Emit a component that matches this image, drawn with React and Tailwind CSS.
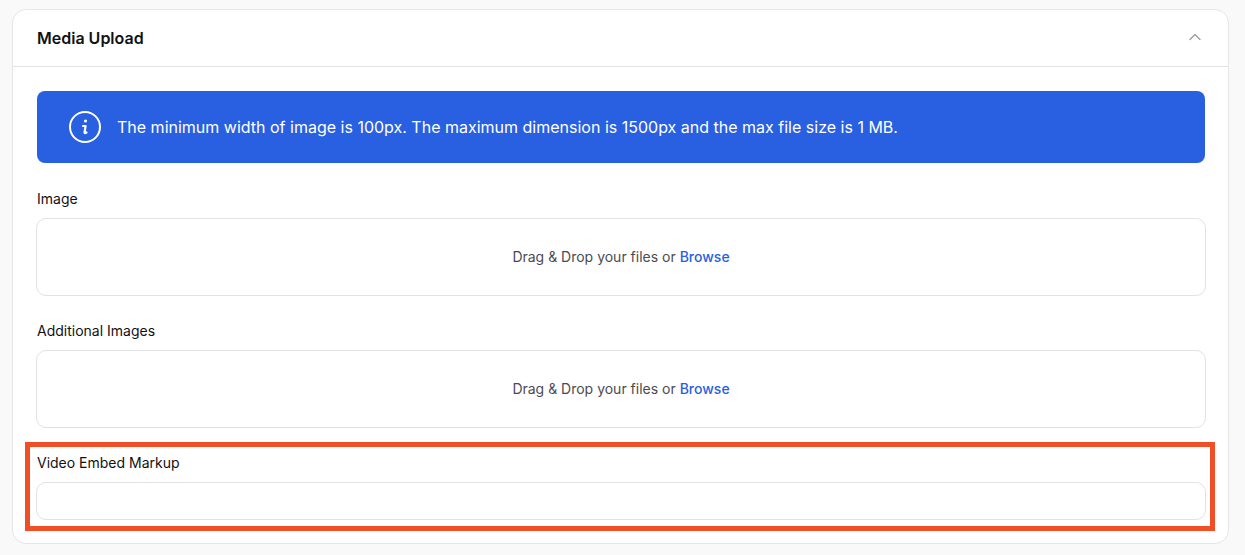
import { ChevronUp } from "lucide-react";

const DropZone = () => (
  <div className="flex h-[78px] items-center justify-center rounded-[10px] border border-[#e2e2e4] bg-white pb-0.5 text-[14px] text-[#4b4b52]">
    <span>
      Drag &amp; Drop your files or <span className="font-medium text-[#2860e1]">Browse</span>
    </span>
  </div>
);

const App = () => {
  return (
    <div className="h-[555px] overflow-hidden bg-[#f9f9f9] px-3 pt-[9px] font-['Inter',sans-serif]">
      <div className="h-[535px] w-[1217px] rounded-[14px] border border-[#e6e6e8] bg-white">
        <div className="flex h-[57px] items-center justify-between border-b border-[#e2e2e4] pr-[23px] pl-6">
          <h2 className="text-[16px] font-semibold text-[#111114]">Media Upload</h2>
          <ChevronUp size={20} strokeWidth={1.5} className="-mt-0.5 text-[#9a9aa2]" />
        </div>

        <div className="pt-6 pr-[23px] pl-6">
          <div className="flex h-[72px] items-center gap-4 rounded-lg bg-[#2860e1] pl-8 text-[16px] text-white">
            <svg width="32" height="32" viewBox="0 0 32 32" fill="none" stroke="white">
              <circle cx="16" cy="16" r="15" strokeWidth="2" />
              <circle cx="16.5" cy="10" r="1.6" fill="white" stroke="none" />
              <path d="M14 15h2.6l-1.1 6.6c0 .6.8.7 2-.1" strokeWidth="2.2" strokeLinecap="round" strokeLinejoin="round" />
            </svg>
            <p>The minimum width of image is 100px. The maximum dimension is 1500px and the max file size is 1 MB.</p>
          </div>

          <div className="-mx-px mt-[26px]">
            <label className="mx-px block text-[14px] leading-5 font-normal text-[#111114]">Image</label>
            <div className="mt-[9px]">
              <DropZone />
            </div>
          </div>

          <div className="-mx-px mt-[25px]">
            <label className="mx-px block text-[14px] leading-5 font-normal text-[#111114]">Additional Images</label>
            <div className="mt-[9px]">
              <DropZone />
            </div>
          </div>

          <div className="relative -mx-px mt-[25px]">
            <label className="mx-px block text-[14px] leading-5 font-normal text-[#111114]">Video Embed Markup</label>
            <input className="mt-[9px] block h-[38px] w-full rounded-[10px] border border-[#e2e2e4] bg-white" />
            <div className="pointer-events-none absolute -top-[11px] -right-[9px] -bottom-[11px] -left-[11px] border-[5px] border-[#f24e25]" />
          </div>
        </div>
      </div>
    </div>
  );
};

export default App;
